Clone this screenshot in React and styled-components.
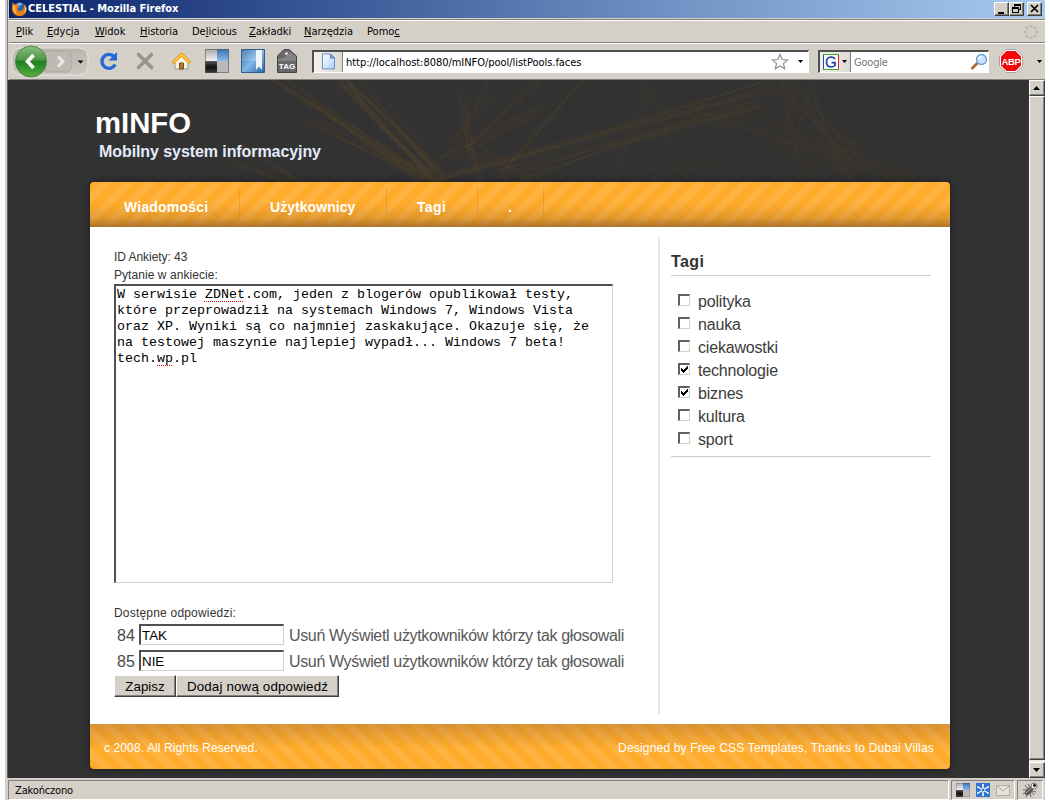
import React from "react";
import styled, { createGlobalStyle, css } from "styled-components";

const GlobalStyle = createGlobalStyle`
  * { box-sizing: border-box; }
  html, body { margin: 0; padding: 0; background: #fff; }
  body { font-family: "Liberation Sans", Arial, sans-serif; overflow: hidden; }
`;

const FACE = "#d4d0c8";
const UI_FONT = `"DejaVu Sans Condensed", "DejaVu Sans", Tahoma, sans-serif`;

const sunken = css`
  border-style: solid;
  border-width: 2px 1px 1px 2px;
  border-color: #505050 #d4d0c8 #d4d0c8 #505050;
`;
const raised = css`
  background: ${FACE};
  border: 1px solid;
  border-color: #fff #404040 #404040 #fff;
  box-shadow: inset -1px -1px 0 #808080;
`;

const BrowserWindow = styled.div`
  width: 1040px;
  height: 800px;
  margin-left: 5px;
  padding-left: 2px;
  display: flex;
  flex-direction: column;
  background: ${FACE};
  font-family: ${UI_FONT};
  color: #000;
`;
const Chrome = styled.div`
  border-left: 1px solid #808080;
  padding-left: 1px;
  background: ${FACE};
`;
const TitleBar = styled.div`
  height: 18px;
  display: flex;
  align-items: center;
  background: linear-gradient(90deg, #0a246a, #3c5a98 32%, #7192c4 64%, #a6caf0);
  padding: 0 3px 0 2px;
`;
const Title = styled.div`
  flex: 1;
  color: #fff;
  font-weight: bold;
  font-size: 11px;
  line-height: 18px;
  letter-spacing: -0.04px;
`;
const WinButton = styled.div`
  ${raised}
  width: 15px;
  height: 14px;
  margin-left: ${(p) => p.$gap || 0}px;
  svg { display: block; }
`;
const MenuBar = styled.div`
  height: 24px;
  margin-top: 1px;
  border-top: 1px solid #808080;
  border-bottom: 1px solid #808080;
  box-shadow: inset 0 1px 0 #fff;
  display: flex;
  align-items: center;
  padding: 1px 6px 0 7px;
`;
const MenuItem = styled.div`
  width: ${(p) => p.$w}px;
  font-size: 11px;
  white-space: nowrap;
  u { text-underline-offset: 1px; text-decoration-thickness: 1px; }
`;
const Grow = styled.div`flex: 1;`;
const Space = styled.div`width: ${(p) => p.$w}px;`;
const ToolBar = styled.div`
  height: 37px;
  border-top: 1px solid #fff;
  border-bottom: 1px solid #808080;
  display: flex;
  align-items: center;
`;
const NavCluster = styled.div`
  width: 80px;
  height: 35px;
  margin-left: 2px;
`;
const ToolIcon = styled.div`
  width: 24px;
  height: 24px;
  margin: 0 0 1px ${(p) => p.$gap}px;
  svg { display: block; overflow: visible; }
`;
const Field = styled.div`
  ${sunken}
  border-right-color: #fff;
  border-bottom-color: #fff;
  height: 23px;
  width: ${(p) => p.$w}px;
  margin: 0 0 1px ${(p) => p.$gap}px;
  display: flex;
  align-items: center;
  background: #fff;
  font-size: 11px;
`;
const FieldBadge = styled.div`
  height: 20px;
  width: ${(p) => p.$w}px;
  border-right: 1px solid #808080;
  background: linear-gradient(90deg, #f2f0ec, #dedbd4);
  display: flex;
  align-items: center;
  justify-content: center;
`;
const FieldText = styled.div`
  flex: 1;
  padding: 1px 0 0 3px;
  color: ${(p) => p.$color || "#000"};
  letter-spacing: ${(p) => p.$ls || 0}px;
  white-space: nowrap;
`;
const Viewport = styled.div`
  height: 698px;
  border-left: 1px solid #606060;
  display: flex;
  background: #323232;
`;
const Page = styled.div`
  width: 1021px;
  position: relative;
  font-family: "Liberation Sans", Arial, sans-serif;
`;
const Straw = styled.svg`
  position: absolute;
  left: 0;
  top: 0;
`;
const Banner = styled.header`
  position: relative;
  height: 102px;
  padding: 26px 0 0 87px;
`;
const SiteName = styled.h1`
  margin: 0;
  font-size: 29.3px;
  line-height: 34px;
  color: #fff;
`;
const Slogan = styled.p`
  margin: 2px 0 0 4px;
  font-size: 16px;
  line-height: 20px;
  font-weight: bold;
  letter-spacing: -0.08px;
  color: #e3ebfb;
`;
const Sheet = styled.div`
  position: relative;
  width: 860px;
  margin-left: 82px;
  border-radius: 4px;
  box-shadow: 0 0 9px rgba(0, 0, 0, 0.45);
`;
const NavBar = styled.nav`
  height: 45px;
  display: flex;
  border-radius: 4px 4px 0 0;
  background:
    linear-gradient(180deg, transparent 0 40%, rgba(120, 80, 20, 0.04) 54%, rgba(110, 70, 30, 0.2) 80%, rgba(90, 55, 35, 0.5) 100%),
    repeating-linear-gradient(135deg, #ffab2b 0 8px, #ffb340 8px 15.6px);
`;
const NavItem = styled.a`
  width: ${(p) => p.$w}px;
  height: 30px;
  margin-top: 6px;
  padding-left: ${(p) => p.$pad}px;
  border-right: 1px solid rgba(170, 110, 20, 0.22);
  color: #fff;
  font-size: 14px;
  font-weight: bold;
  line-height: 38px;
  letter-spacing: ${(p) => p.$ls || 0}px;
  white-space: nowrap;
`;
const Columns = styled.div`
  height: 497px;
  display: flex;
  background: #fff;
`;
const Main = styled.main`
  width: 570px;
  height: 477px;
  margin-top: 10px;
  padding: 11px 0 0 24px;
  border-right: 2px solid #e6e6e6;
`;
const Line = styled.p`
  margin: 0;
  font-size: 12px;
  line-height: 18px;
  color: #333;
  letter-spacing: ${(p) => p.$ls || 0}px;
`;
const Question = styled.div`
  ${sunken}
  width: 499px;
  height: 299px;
  margin-bottom: 21px;
  padding: 1px 0 0 1px;
  background: #fff;
  color: #000;
  font: 13.33px/16px "Liberation Mono", "Courier New", monospace;
  white-space: pre;
`;
const Misspelt = styled.span`
  text-decoration: underline dotted #e00000 1px;
  text-decoration-skip-ink: none;
  text-underline-offset: 3px;
`;
const Answer = styled.div`
  height: 26px;
  display: flex;
  align-items: center;
  padding: 1px 0 0 3px;
  font-size: 16px;
  color: #585858;
  white-space: nowrap;
`;
const AnswerId = styled.span`
  width: 22px;
  color: #484848;
`;
const AnswerInput = styled.div`
  ${sunken}
  width: 145px;
  height: 21px;
  padding-left: 1px;
  margin: 0 5px 3px 0;
  background: #fff;
  color: #000;
  font-size: 13.33px;
  line-height: 19px;
`;
const AnswerLink = styled.a`
  margin-right: 4px;
  letter-spacing: -0.34px;
`;
const Buttons = styled.div`
  display: flex;
`;
const PushButton = styled.div`
  ${raised}
  width: ${(p) => p.$w}px;
  height: 22px;
  margin-top: 1px;
  text-align: center;
  font-size: 13.33px;
  line-height: 21px;
  letter-spacing: ${(p) => p.$ls || 0}px;
  color: #000;
`;
const Side = styled.aside`
  width: 260px;
  margin-left: 11px;
  padding-top: 24px;
`;
const SideTitle = styled.h2`
  margin: 0;
  height: 25px;
  font-size: 16px;
  line-height: 22px;
  letter-spacing: 0.4px;
  color: #333;
  border-bottom: 1px solid #ccc;
`;
const TagList = styled.div`
  padding: 14px 0 5px 7px;
  border-bottom: 1px solid #ccc;
`;
const Tag = styled.label`
  height: 23px;
  display: flex;
  align-items: center;
  font-size: 16px;
  color: #3c3c3c;
  letter-spacing: -0.18px;
`;
const Box = styled.span`
  width: 12px;
  height: 12px;
  margin: 0 8px 4px 0;
  background: #fff;
  border: solid;
  border-width: 2px 1px 1px 2px;
  border-color: #606060 #d4d0c8 #d4d0c8 #606060;
  svg { display: block; }
`;
const Footer = styled.footer`
  height: 45px;
  display: flex;
  justify-content: space-between;
  padding: 0 16px 0 14px;
  border-radius: 0 0 4px 4px;
  color: #fff;
  font-size: 12px;
  line-height: 48px;
  background:
    linear-gradient(0deg, transparent 0 45%, rgba(120, 80, 20, 0.06) 56%, rgba(130, 80, 50, 0.3) 100%),
    repeating-linear-gradient(45deg, #ffab2b 0 8px, #ffb340 8px 15.6px);
`;
const FootText = styled.span`letter-spacing: ${(p) => p.$ls || 0}px;`;
const ScrollBar = styled.div`
  width: 16px;
  display: flex;
  flex-direction: column;
  background: #ece9e4;
`;
const ScrollButton = styled.div`
  ${raised}
  height: 16px;
  svg { display: block; }
`;
const ScrollThumb = styled.div`
  ${raised}
  flex: 1;
  margin-bottom: 2px;
`;
const StatusBar = styled.div`
  height: 22px;
  padding-top: 2px;
  display: flex;
  padding-left: 1px;
`;
const StatusPanel = styled.div`
  height: 20px;
  flex: ${(p) => (p.$w ? `0 0 ${p.$w}px` : "1")};
  margin-right: 2px;
  border: 1px solid;
  border-color: #808080 #fff #fff #808080;
  display: flex;
  align-items: center;
  gap: 6px;
  padding-left: ${(p) => p.$pad}px;
  font-size: 11px;
  letter-spacing: -0.15px;
  svg { display: block; flex: none; }
`;

const bundles = [
  [270, 0, 430, 102, 12, 8],
  [330, 0, 425, 95, 18, 11],
  [345, 0, 440, 102, 12, 8],
  [305, 20, 415, 102, 8, 8],
  [382, 22, 428, 90, 6, 7],
  [300, 40, 425, 100, 10, 10],
  [450, 5, 470, 102, 10, 9],
  [495, 0, 440, 70, 10, 12],
  [530, 0, 460, 65, 6, 7],
  [570, 0, 495, 92, 7, 6],
  [425, 82, 530, 30, 12, 10],
  [435, 98, 760, 6, 12, 13],
  [500, 96, 750, 20, 14, 13],
  [440, 60, 540, 102, 8, 22],
  [640, 0, 605, 102, 9, 11],
  [650, 0, 660, 60, 8, 22],
  [660, 102, 700, 0, 8, 20],
  [690, 30, 900, 102, 14, 12],
  [730, 30, 905, 98, 12, 12],
  [775, 0, 800, 102, 14, 14],
  [785, 0, 846, 102, 12, 18],
  [780, 0, 850, 78, 12, 18],
  [840, 0, 836, 60, 6, 12],
  [650, 95, 780, 62, 8, 12],
  [655, 88, 725, 40, 8, 14],
  [220, 80, 280, 102, 7, 8],
  [240, 66, 290, 100, 7, 8],
  [765, 75, 850, 92, 8, 9],
  [830, 74, 855, 60, 7, 12],
];
const noise = (n) => {
  const s = Math.sin(n * 127.1) * 43758.5453;
  return s - Math.floor(s) - 0.5;
};

function StrawArt() {
  return (
    <Straw width="1021" height="102" viewBox="0 0 1021 102">
      <g fill="none" strokeLinecap="round">
        {bundles.map(([x1, y1, x2, y2, count, spread], b) =>
          Array.from({ length: count }, (_, i) => {
            const k = b * 31 + i * 7 + 1;
            const dx1 = noise(k) * spread * 2.8;
            const dy1 = noise(k + 1) * spread * 1.2;
            const dx2 = noise(k + 2) * spread * 1.2;
            const dy2 = noise(k + 3) * spread * 1.2;
            const mx = (x1 + x2) / 2 + noise(k + 4) * spread * 1.2;
            const my = (y1 + y2) / 2 + noise(k + 5) * spread * 1.2;
            return (
              <path
                key={`${b}-${i}`}
                d={`M${x1 + dx1} ${y1 + dy1}Q${mx} ${my} ${x2 + dx2} ${y2 + dy2}`}
                stroke={x1 > 600 ? "#6a5030" : "#70542e"}
                strokeOpacity={(x1 > 600 ? 0.045 : 0.06) + 0.04 * noise(k + 6)}
                strokeWidth={2.2 + noise(k + 5) * 2}
              />
            );
          })
        )}
      </g>
    </Straw>
  );
}

const FirefoxLogo = () => (
  <svg width="17" height="17" viewBox="0 0 17 17">
    <circle cx="8.5" cy="8" r="6.5" fill="#2b63b5" />
    <path d="M6 2.500q3-1.500 5.500 0L9 5 6 5z" fill="#79b8ea" />
    <path d="M1.500 1.500 4 3.500l3-.5-.5 2L8.500 6 6.500 7.500Q6.500 10 9 10q3 0 4-3.500L12.500 3Q16 5 15.500 9q-1 6-7 6.200Q1.500 14.500 1 8.500 1 4 1.500 1.500z" fill="#e8801a" />
    <path d="M2 5Q1.500 11 6 13.500 3.500 9 4.500 5z" fill="#f9c63a" />
    <path d="M13.500 5q1.500 4-1 7 3-1 2.800-4.500z" fill="#ffd94a" />
  </svg>
);

const Caret = () => (
  <svg width="5" height="3" viewBox="0 0 5 3"><path d="M0 0h5L2.500 3z" fill="#000" /></svg>
);

const BackForward = () => (
  <svg width="80" height="35" viewBox="0 0 80 35">
    <defs>
      <linearGradient id="green" x1="0" y1="0" x2="0" y2="1">
        <stop offset="0" stopColor="#8abf84" />
        <stop offset=".45" stopColor="#4a9645" />
        <stop offset=".5" stopColor="#1f7f20" />
        <stop offset="1" stopColor="#55b043" />
      </linearGradient>
      <linearGradient id="pill" x1="0" y1="0" x2="0" y2="1">
        <stop offset="0" stopColor="#b9b6af" />
        <stop offset="1" stopColor="#cbc8c1" />
      </linearGradient>
    </defs>
    <rect x="1" y="4" width="76" height="27" rx="9" fill="url(#pill)" stroke="#e8e5df" />
    <path d="M34 7h22q4 0 4 4v13q0 4-4 4H34z" fill="#bdbab3" stroke="#aaa7a0" />
    <path d="m47 12.500 5 5-5 5" fill="none" stroke="#ebe9e4" strokeWidth="3" />
    <path d="M66.500 16.500h6l-3 3z" fill="#000" />
    <circle cx="20" cy="17.500" r="15.500" fill="url(#green)" stroke="#4c844a" />
    <path d="m22.500 11-6 6.500 6 6.500" fill="none" stroke="#fff" strokeWidth="3.600" />
  </svg>
);

const Reload = () => (
  <svg width="24" height="24" viewBox="0 0 24 24">
    <path d="M18.200 15.500A7 7 0 1 1 17 7.500" fill="none" stroke="#2469d8" strokeWidth="3.400" />
    <path d="M20 3v8.500h-8.500z" fill="#2469d8" />
  </svg>
);
const Stop = () => (
  <svg width="24" height="24" viewBox="0 0 24 24">
    <path d="m5.500 5.500 13 13M18.500 5.500l-13 13" stroke="#97948f" strokeWidth="3.600" strokeLinecap="round" />
  </svg>
);
const Home = () => (
  <svg width="24" height="24" viewBox="0 0 24 24">
    <path d="M6 12v8h13v-8l-6.500-6z" fill="#f6f3e6" stroke="#9a9790" />
    <path d="M12.500 3.500 3 13l2 1.500 7.500-7 7.500 7 2-1.500z" fill="#ffc83c" stroke="#d9981c" />
    <path d="M10.500 20v-6h4v6z" fill="#b77930" stroke="#7d4e17" />
  </svg>
);
const Delicious = ({ s = 24 }) => (
  <svg width={s} height={s} viewBox="0 0 24 24">
    <defs>
      <linearGradient id="dk" x1="0" y1="0" x2="0" y2="1"><stop offset="0" stopColor="#555" /><stop offset=".5" stopColor="#111" /><stop offset="1" stopColor="#3a3a3a" /></linearGradient>
      <linearGradient id="bl" x1="0" y1="0" x2="0" y2="1"><stop offset="0" stopColor="#3b6fb0" /><stop offset="1" stopColor="#8bbcec" /></linearGradient>
      <linearGradient id="gw" x1="0" y1="0" x2="0" y2="1"><stop offset="0" stopColor="#a5a8aa" /><stop offset="1" stopColor="#f2f2f2" /></linearGradient>
    </defs>
    <path fill="url(#gw)" d="M0 0h12v12H0z" />
    <path fill="url(#bl)" d="M12 0h12v12H12z" />
    <path fill="url(#dk)" d="M0 12h12v12H0z" />
    <path fill="#b9b9b9" d="M12 12h12v12H12z" />
    <path d="M.5.5h23v23H.5z" fill="none" stroke="#555" strokeOpacity=".6" />
  </svg>
);
const Bookmark = () => (
  <svg width="24" height="24" viewBox="0 0 24 24">
    <defs><linearGradient id="bm" x1="0" y1="0" x2="1" y2="1"><stop offset="0" stopColor="#285f9f" /><stop offset=".5" stopColor="#83b7e8" /><stop offset="1" stopColor="#2865a8" /></linearGradient></defs>
    <path fill="url(#bm)" stroke="#315d8e" d="M.5.5h23v23H.5z" />
    <path fill="#edf5fd" d="M15 1h6v20l-3-3.500-3 3.500z" />
    <path fill="#fff" fillOpacity=".18" d="M1 1h14v11H1z" />
  </svg>
);
const TagIcon = () => (
  <svg width="24" height="24" viewBox="0 0 24 24">
    <path d="M2.500 7 9 .500h5L21.500 7v16.500h-19z" fill="#686868" stroke="#454545" />
    <circle cx="11.500" cy="4.500" r="1.500" fill="#ddd" />
    <path d="M3 10q8 0 12-7l6 5v4H3z" fill="#999" fillOpacity=".6" />
    <text x="12" y="20" textAnchor="middle" fontFamily="Liberation Sans, sans-serif" fontSize="8" fontWeight="bold" fill="#fff">TAG</text>
  </svg>
);
const PageIcon = () => (
  <svg width="15" height="17" viewBox="0 0 15 17">
    <defs><linearGradient id="pg" x1="0" y1="0" x2="1" y2="1"><stop offset="0" stopColor="#fff" /><stop offset="1" stopColor="#a9cdf8" /></linearGradient></defs>
    <path d="M1.500 1h8l4 4v11h-12z" fill="url(#pg)" stroke="#6f8fc4" />
    <path d="M9.500 1v4h4z" fill="#7da4da" stroke="#6283bd" />
  </svg>
);
const StarIcon = () => (
  <svg width="18" height="17" viewBox="0 0 18 17">
    <path d="m9 1.500 2.200 5 5.300.5-4 3.600 1.200 5.200L9 13l-4.700 2.800 1.200-5.200-4-3.600 5.300-.5z" fill="#fafafa" stroke="#909090" strokeWidth="1.200" />
  </svg>
);
const Lens = () => (
  <svg width="18" height="18" viewBox="0 0 18 18">
    <path d="m1.500 16 6-6" stroke="#a66b3c" strokeWidth="2.600" />
    <circle cx="11.500" cy="6.500" r="5" fill="#c3e2fb" stroke="#6d9dd0" strokeWidth="1.300" />
    <path d="M8.500 6q1-3 4-2.500" fill="none" stroke="#fff" strokeWidth="1.500" />
  </svg>
);
const GoogleG = () => (
  <svg width="16" height="16" viewBox="0 0 16 16">
    <path fill="#fff" d="M0 0h16v16H0z" />
    <path d="M0 .5h16" stroke="#39a935" />
    <path d="M15.500 1v14" stroke="#d22" />
    <path d="M0 15.500h16" stroke="#39a935" />
    <path d="M.5 1v14" stroke="#2447b5" />
    <path d="M12 5Q10.500 3 8 3 3.500 3.300 3.500 8T8 13q2.500 0 4-1.500V8.700H8.500" fill="none" stroke="#1f3f9e" strokeWidth="1.700" />
  </svg>
);
const Abp = () => (
  <svg width="24" height="24" viewBox="0 0 24 24">
    <path d="M7 .5h10L23.500 7v10L17 23.500H7L.5 17V7z" fill="#fff" stroke="#a5a5a5" />
    <path d="M7.500 2h9L22 7.500v9L16.500 22h-9L2 16.500v-9z" fill="#f00a0c" />
    <text x="12" y="15.500" textAnchor="middle" fontFamily="Liberation Sans Narrow, Liberation Sans, sans-serif" fontSize="9.500" letterSpacing="-0.4" fontWeight="bold" fill="#fff">ABP</text>
  </svg>
);
const Throbber = () => (
  <svg width="16" height="16" viewBox="0 0 16 16">
    {[0, 1, 2, 3, 4, 5, 6, 7].map((i) => (
      <circle key={i} cx={8 + 5.7 * Math.sin((i * Math.PI) / 4)} cy={8 - 5.7 * Math.cos((i * Math.PI) / 4)} r="1.6" fill="#bbb8b1" />
    ))}
  </svg>
);
const Snowflake = () => (
  <svg width="14" height="14" viewBox="0 0 14 14">
    <path fill="#2d74d3" d="M0 0h14v14H0z" />
    <path d="M7 1.500v11M2 4l10 6M2 10l10-6" stroke="#fff" strokeWidth="1.400" />
    <circle cx="7" cy="7" r="1.300" fill="#2d74d3" />
    <path d="M6 2h2M6 12h2M2 3v2M12 3v2M2 9v2M12 9v2" stroke="#fff" strokeWidth="1.300" />
  </svg>
);
const Mail = () => (
  <svg width="14" height="11" viewBox="0 0 14 11">
    <path d="M.5.5h13v10H.5z" fill="#e6e4d8" stroke="#b0ae9f" />
    <path d="m1 1 6 5 6-5" fill="none" stroke="#a8a696" />
  </svg>
);
const Bug = () => (
  <svg width="16" height="16" viewBox="0 0 16 16">
    <path d="M1 8h4M3 3l3 4M1 12l4-2M4 15l2-4M9 15l-1-4M14 10l-4-1M6 2l2 3M12 13l-3-4" stroke="#666" />
    <ellipse cx="7" cy="9" rx="5" ry="2.800" transform="rotate(-45 7 9)" fill="#5a5a5a" />
    <path d="m4 11 5-5" stroke="#aaa" />
    <circle cx="12" cy="4" r="3" fill="#eee" stroke="#777" />
    <circle cx="12.500" cy="3.500" r="1.400" fill="#111" />
  </svg>
);
const Check = () => (
  <svg width="9" height="9" viewBox="0 0 9 9" shapeRendering="crispEdges">
    <path d="M1 3v3l2 2 5-5V0L3 5z" fill="#000" />
  </svg>
);

const MENUS = [
  ["", "P", "lik", 31], ["", "E", "dycja", 48], ["", "W", "idok", 45], ["", "H", "istoria", 52],
  ["De", "l", "icious", 57], ["", "Z", "akładki", 55], ["", "N", "arzędzia", 63], ["Pomo", "c", "", 40],
];
const TAGS = [
  ["polityka"], ["nauka"], ["ciekawostki"], ["technologie", true], ["biznes", true], ["kultura"], ["sport"],
];
const NAV = [["Wiadomości", 150, 34, 0.2], ["Użytkownicy", 147, 30, 0.05], ["Tagi", 91, 30, 0.35], [".", 66, 30, 0]];

export default function App() {
  return (
    <>
      <GlobalStyle />
      <BrowserWindow>
        <Chrome>
          <TitleBar>
            <FirefoxLogo />
            <Title>CELESTIAL - Mozilla Firefox</Title>
            <WinButton><svg width="13" height="12"><path d="M3 9h6v2H3z" /></svg></WinButton>
            <WinButton>
              <svg width="13" height="12" shapeRendering="crispEdges">
                <path d="M4 1h7v6H9V6h1V3H5v1H4zM2 4h7v6H2zm1 2v3h5V6z" fillRule="evenodd" />
              </svg>
            </WinButton>
            <WinButton $gap={3}><svg width="13" height="12"><path d="m3 2 7 7M10 2 3 9" stroke="#000" strokeWidth="1.700" /></svg></WinButton>
          </TitleBar>
          <MenuBar>
            {MENUS.map(([a, u, b, w]) => (
              <MenuItem key={b + u} $w={w}>{a}<u>{u}</u>{b}</MenuItem>
            ))}
            <Grow />
            <Throbber />
          </MenuBar>
          <ToolBar>
            <NavCluster><BackForward /></NavCluster>
            <ToolIcon $gap={6}><Reload /></ToolIcon>
            <ToolIcon $gap={12}><Stop /></ToolIcon>
            <ToolIcon $gap={12}><Home /></ToolIcon>
            <ToolIcon $gap={12}><Delicious /></ToolIcon>
            <ToolIcon $gap={12}><Bookmark /></ToolIcon>
            <ToolIcon $gap={10}><TagIcon /></ToolIcon>
            <Field $w={497} $gap={13}>
              <FieldBadge $w={29}><PageIcon /></FieldBadge>
              <FieldText $ls={-0.04}>http://localhost:8080/mINFO/pool/listPools.faces</FieldText>
              <StarIcon />
              <Space $w={9} />
              <Caret />
              <Space $w={5} />
            </Field>
            <Field $w={171} $gap={9}>
              <FieldBadge $w={31}><GoogleG /><Space $w={3} /><Caret /></FieldBadge>
              <FieldText $color="#777" $ls={-0.2}>Google</FieldText>
              <Lens />
            </Field>
            <ToolIcon $gap={10}><Abp /></ToolIcon>
            <Grow />
            <Caret />
            <Space $w={3} />
          </ToolBar>
        </Chrome>
        <Viewport>
          <Page>
            <StrawArt />
            <Banner>
              <SiteName>mINFO</SiteName>
              <Slogan>Mobilny system informacyjny</Slogan>
            </Banner>
            <Sheet>
              <NavBar>
                {NAV.map(([label, w, pad, ls]) => (
                  <NavItem key={label} $w={w} $pad={pad} $ls={ls}>{label}</NavItem>
                ))}
              </NavBar>
              <Columns>
                <Main>
                  <Line $ls={-0.05}>ID Ankiety: 43</Line>
                  <Line $ls={0.06}>Pytanie w ankiecie:</Line>
                  <Question>
                    W serwisie <Misspelt>ZDNet</Misspelt>.com, jeden z blogerów opublikował testy,{"\n"}
                    które przeprowadził na systemach Windows 7, Windows Vista{"\n"}
                    oraz XP. Wyniki są co najmniej zaskakujące. Okazuje się, że{"\n"}
                    na testowej maszynie najlepiej wypadł... Windows 7 beta!{"\n"}
                    tech.<Misspelt>wp</Misspelt>.pl
                  </Question>
                  <Line $ls={0.2}>Dostępne odpowiedzi:</Line>
                  {[["84", "TAK"], ["85", "NIE"]].map(([id, value]) => (
                    <Answer key={id}>
                      <AnswerId>{id}</AnswerId>
                      <AnswerInput>{value}</AnswerInput>
                      <AnswerLink>Usuń</AnswerLink>
                      <AnswerLink>Wyświetl użytkowników którzy tak głosowali</AnswerLink>
                    </Answer>
                  ))}
                  <Buttons>
                    <PushButton $w={62}>Zapisz</PushButton>
                    <PushButton $w={163} $ls={0.17}>Dodaj nową odpowiedź</PushButton>
                  </Buttons>
                </Main>
                <Side>
                  <SideTitle>Tagi</SideTitle>
                  <TagList>
                    {TAGS.map(([name, on]) => (
                      <Tag key={name}><Box>{on && <Check />}</Box>{name}</Tag>
                    ))}
                  </TagList>
                </Side>
              </Columns>
              <Footer>
                <FootText $ls={0.11}>c 2008. All Rights Reserved.</FootText>
                <FootText $ls={0.18}>Designed by Free CSS Templates, Thanks to Dubai Villas</FootText>
              </Footer>
            </Sheet>
          </Page>
          <ScrollBar>
            <ScrollButton><svg width="14" height="14"><path d="M3 9h7L6.500 5z" /></svg></ScrollButton>
            <ScrollThumb />
            <ScrollButton><svg width="14" height="14"><path d="M3 5h7L6.500 9z" /></svg></ScrollButton>
          </ScrollBar>
        </Viewport>
        <StatusBar>
          <StatusPanel $pad={6}>Zakończono</StatusPanel>
          <StatusPanel $w={64} $pad={4}><Delicious s={14} /><Snowflake /><Mail /></StatusPanel>
          <StatusPanel $w={26} $pad={4}><Bug /></StatusPanel>
        </StatusBar>
      </BrowserWindow>
    </>
  );
}
